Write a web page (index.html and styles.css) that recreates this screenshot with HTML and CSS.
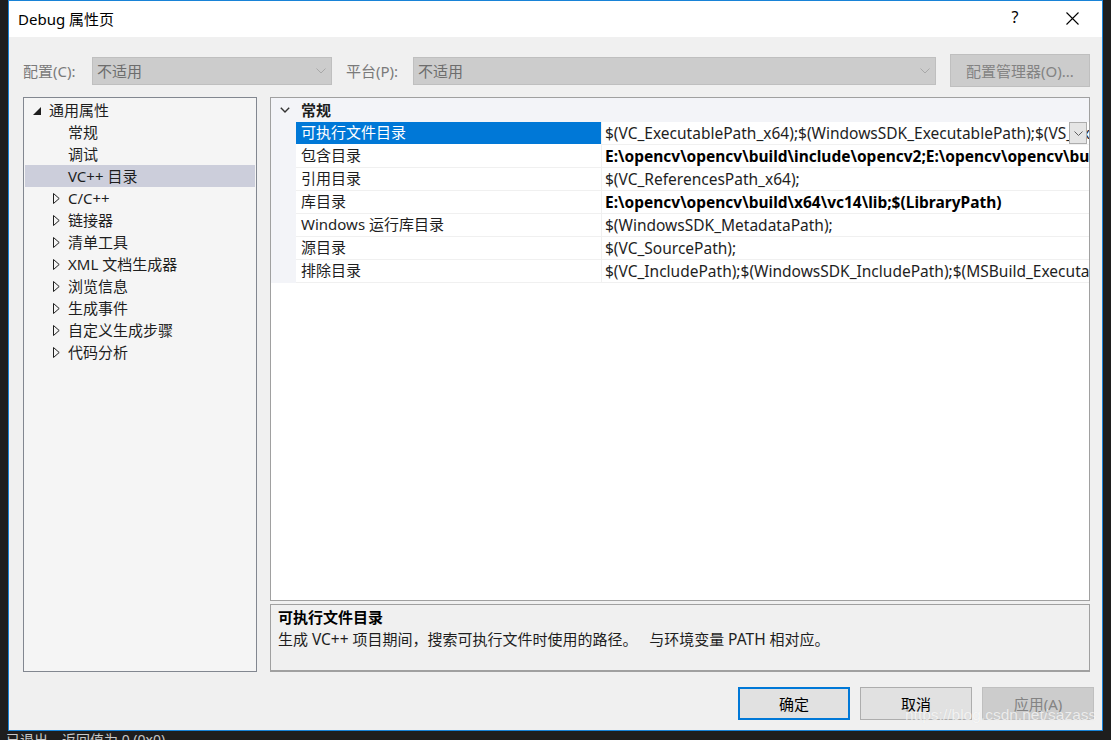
FILE: index.html
```html
<!DOCTYPE html>
<html lang="zh">
<head>
<meta charset="utf-8">
<title>Debug 属性页</title>
<link rel="stylesheet" href="styles.css">
</head>
<body>
<div class="screen">
  <div class="window">
    <div class="titlebar">
      <span class="title">Debug 属性页</span>
      <span class="tb-btn tb-help">?</span>
      <span class="tb-btn tb-close">
        <svg width="13" height="13" viewBox="0 0 13 13"><path d="M0.5 0.5 L12.5 12.5 M12.5 0.5 L0.5 12.5" stroke="#000" stroke-width="1.1" fill="none"/></svg>
      </span>
    </div>
    <div class="body">
      <div class="config-row">
        <span class="cfg-label cfg-label-1">配置(C):</span>
        <div class="combo combo-1"><span>不适用</span>
          <svg class="chev" width="10" height="6" viewBox="0 0 10 6"><path d="M0.5 0.5 L5 5 L9.5 0.5" stroke="#a8a8a8" fill="none"/></svg>
        </div>
        <span class="cfg-label cfg-label-2">平台(P):</span>
        <div class="combo combo-2"><span>不适用</span>
          <svg class="chev" width="10" height="6" viewBox="0 0 10 6"><path d="M0.5 0.5 L5 5 L9.5 0.5" stroke="#a8a8a8" fill="none"/></svg>
        </div>
        <div class="btn btn-disabled cfg-btn">配置管理器(O)...</div>
      </div>

      <div class="main">
        <div class="tree">
          <div class="tree-row">
            <span class="tw tw0"><svg width="8" height="8" viewBox="0 0 8 8"><polygon points="8,0 8,8 0,8" fill="#1e1e1e"/></svg></span>
            <span class="lbl">通用属性</span>
          </div>
          <div class="tree-row"><span class="tw tw1"></span><span class="lbl">常规</span></div>
          <div class="tree-row"><span class="tw tw1"></span><span class="lbl">调试</span></div>
          <div class="tree-row selected"><span class="tw tw1"></span><span class="lbl">VC++ 目录</span></div>
          <div class="tree-row"><span class="tw tw1"><svg width="7" height="11" viewBox="0 0 7 11"><polygon points="0.5,0.5 6.2,5.5 0.5,10.5" fill="none" stroke="#1e1e1e"/></svg></span><span class="lbl">C/C++</span></div>
          <div class="tree-row"><span class="tw tw1"><svg width="7" height="11" viewBox="0 0 7 11"><polygon points="0.5,0.5 6.2,5.5 0.5,10.5" fill="none" stroke="#1e1e1e"/></svg></span><span class="lbl">链接器</span></div>
          <div class="tree-row"><span class="tw tw1"><svg width="7" height="11" viewBox="0 0 7 11"><polygon points="0.5,0.5 6.2,5.5 0.5,10.5" fill="none" stroke="#1e1e1e"/></svg></span><span class="lbl">清单工具</span></div>
          <div class="tree-row"><span class="tw tw1"><svg width="7" height="11" viewBox="0 0 7 11"><polygon points="0.5,0.5 6.2,5.5 0.5,10.5" fill="none" stroke="#1e1e1e"/></svg></span><span class="lbl">XML 文档生成器</span></div>
          <div class="tree-row"><span class="tw tw1"><svg width="7" height="11" viewBox="0 0 7 11"><polygon points="0.5,0.5 6.2,5.5 0.5,10.5" fill="none" stroke="#1e1e1e"/></svg></span><span class="lbl">浏览信息</span></div>
          <div class="tree-row"><span class="tw tw1"><svg width="7" height="11" viewBox="0 0 7 11"><polygon points="0.5,0.5 6.2,5.5 0.5,10.5" fill="none" stroke="#1e1e1e"/></svg></span><span class="lbl">生成事件</span></div>
          <div class="tree-row"><span class="tw tw1"><svg width="7" height="11" viewBox="0 0 7 11"><polygon points="0.5,0.5 6.2,5.5 0.5,10.5" fill="none" stroke="#1e1e1e"/></svg></span><span class="lbl">自定义生成步骤</span></div>
          <div class="tree-row"><span class="tw tw1"><svg width="7" height="11" viewBox="0 0 7 11"><polygon points="0.5,0.5 6.2,5.5 0.5,10.5" fill="none" stroke="#1e1e1e"/></svg></span><span class="lbl">代码分析</span></div>
        </div>

        <div class="right">
          <div class="grid">
            <div class="grid-head">
              <div class="gutter">
                <svg width="10" height="6" viewBox="0 0 10 6"><path d="M0.8 0.8 L5 5 L9.2 0.8" stroke="#333" stroke-width="1.4" fill="none"/></svg>
              </div>
              <span class="section-title">常规</span>
            </div>
            <div class="grid-row sel">
              <div class="gutter"></div>
              <div class="name">可执行文件目录</div>
              <div class="value"><span class="vtext">$(VC_ExecutablePath_x64);$(WindowsSDK_ExecutablePath);$(VS_ExecutablePath);$(MSBuild_ExecutablePath)</span>
                <div class="dd">
                  <svg width="9" height="5" viewBox="0 0 9 5"><path d="M0.5 0.5 L4.5 4.5 L8.5 0.5" stroke="#606060" fill="none"/></svg>
                </div>
              </div>
            </div>
            <div class="grid-row">
              <div class="gutter"></div>
              <div class="name">包含目录</div>
              <div class="value bold"><span class="vtext">E:\opencv\opencv\build\include\opencv2;E:\opencv\opencv\build\include;$(IncludePath)</span></div>
            </div>
            <div class="grid-row">
              <div class="gutter"></div>
              <div class="name">引用目录</div>
              <div class="value"><span class="vtext">$(VC_ReferencesPath_x64);</span></div>
            </div>
            <div class="grid-row">
              <div class="gutter"></div>
              <div class="name">库目录</div>
              <div class="value bold"><span class="vtext">E:\opencv\opencv\build\x64\vc14\lib;$(LibraryPath)</span></div>
            </div>
            <div class="grid-row">
              <div class="gutter"></div>
              <div class="name">Windows 运行库目录</div>
              <div class="value"><span class="vtext">$(WindowsSDK_MetadataPath);</span></div>
            </div>
            <div class="grid-row">
              <div class="gutter"></div>
              <div class="name">源目录</div>
              <div class="value"><span class="vtext">$(VC_SourcePath);</span></div>
            </div>
            <div class="grid-row">
              <div class="gutter"></div>
              <div class="name">排除目录</div>
              <div class="value"><span class="vtext">$(VC_IncludePath);$(WindowsSDK_IncludePath);$(MSBuild_ExecutablePath);$(VC_LibraryPath_x64)</span></div>
            </div>
          </div>
          <div class="desc">
            <div class="desc-title">可执行文件目录</div>
            <div class="desc-text">生成 <span class="lat">VC++</span> 项目期间，搜索可执行文件时使用的路径。&nbsp;&nbsp;&nbsp;与环境变量 <span class="lat">PATH</span> 相对应。</div>
          </div>
        </div>
      </div>

      <div class="footer">
        <div class="btn btn-default">确定</div>
        <div class="btn">取消</div>
        <div class="btn btn-disabled">应用(A)</div>
      </div>
    </div>
  </div>
  <div class="bottom-text">已退出，返回值为 0 (0x0)。</div>
  <div class="watermark">https://blog.csdn.net/sazass</div>
</div>
</body>
</html>
```

FILE: styles.css
```css
* { box-sizing: border-box; }

html, body {
  margin: 0;
  padding: 0;
  background: #1e1e1e;
  overflow: hidden;
}

body {
  width: 1111px;
  height: 740px;
  font-family: "Noto Sans", "Noto Sans CJK SC", sans-serif;
  font-size: 15px;
  color: #1e1e1e;
}

.screen {
  position: relative;
  width: 1111px;
  height: 740px;
  overflow: hidden;
  background: #1e1e1e;
}

.window {
  margin-left: 8px;
  width: 1095px;
  height: 731px;
  border: 1px solid #1883d7;
  background: #f0f0f0;
  display: flex;
  flex-direction: column;
}

/* title bar */
.titlebar {
  height: 36px;
  background: #ffffff;
  display: flex;
  align-items: center;
  padding-left: 9px;
  padding-right: 7px;
  flex: none;
}
.title {
  flex: 1;
  font-size: 15px;
  color: #000;
  padding-bottom: 2px;
}
.tb-btn {
  width: 46px;
  height: 36px;
  display: flex;
  align-items: center;
  justify-content: center;
}
.tb-help {
  margin-right: 11px;
  font-size: 16px;
  color: #000;
  padding-bottom: 4px;
}
.tb-close svg { display: block; margin-bottom: 2px; }

/* body */
.body {
  flex: 1;
  display: flex;
  flex-direction: column;
  padding: 17px 12px 10px 14px;
}

.config-row {
  height: 33px;
  display: flex;
  align-items: center;
  flex: none;
}
.cfg-label {
  color: #7a7a7a;
  font-size: 15px;
}
.cfg-label-1 { width: 69px; }
.cfg-label-2 { width: 67px; margin-left: 14px; }
.combo {
  height: 28px;
  background: #cccccc;
  border: 1px solid #bfbfbf;
  display: flex;
  align-items: center;
  justify-content: space-between;
  padding: 0 5px 0 4px;
  color: #6d6d6d;
}
.combo span { padding-bottom: 1px; }
.combo-1 { width: 240px; }
.combo-2 { width: 523px; }
.chev { display: block; }

.btn {
  width: 112px;
  height: 33px;
  display: flex;
  align-items: center;
  justify-content: center;
  background: #e1e1e1;
  border: 1px solid #adadad;
  color: #000;
  font-size: 15px;
}
.btn-disabled {
  background: #cccccc;
  border-color: #bfbfbf;
  color: #838383;
}
.btn-default {
  border: 2px solid #0078d7;
}
.cfg-btn {
  width: 140px;
  margin-left: 14px;
}

/* main */
.main {
  margin-top: 10px;
  height: 575px;
  display: flex;
  gap: 13px;
  flex: none;
}

.tree {
  width: 234px;
  border: 1px solid #828790;
  background: #f5f5f5;
  padding: 1px 1px 0 1px;
  display: flex;
  flex-direction: column;
}
.tree-row {
  height: 22px;
  flex: none;
  display: flex;
  align-items: center;
  color: #1e1e1e;
  white-space: nowrap;
}
.tree-row.selected,
.tree-row.selected .tw { background-color: #cccedb; }
.tw {
  flex: none;
  display: flex;
  align-items: center;
  height: 22px;
}
.tw svg { display: block; margin-top: 1px; }
.tw0 { width: 24px; padding-left: 8px; }
.tw1 { width: 43px; padding-left: 28px; }
.lbl { padding-bottom: 1px; }

.right {
  width: 820px;
  display: flex;
  flex-direction: column;
  gap: 3px;
}

.grid {
  height: 504px;
  border: 1px solid #a0a0a0;
  background: #ffffff;
  overflow: hidden;
}
.grid-head {
  height: 24px;
  display: flex;
  align-items: center;
  background: #f3f4f8;
}
.gutter {
  width: 25px;
  flex: none;
  align-self: stretch;
  background: #f3f4f8;
  display: flex;
  align-items: center;
  justify-content: center;
}
.grid-head .gutter svg { margin-left: 2px; }
.section-title {
  font-weight: bold;
  padding-left: 5px;
  padding-bottom: 1px;
  color: #1e1e1e;
}
.grid-row {
  height: 23px;
  display: flex;
  white-space: nowrap;
}
.grid-row .name {
  width: 305px;
  flex: none;
  padding-left: 5px;
  line-height: 21px;
  border-bottom: 1px solid #f0f0f0;
  color: #1e1e1e;
}
.grid-row .value {
  flex: 1;
  min-width: 0;
  display: flex;
  align-items: center;
  border-left: 1px solid #f0f0f0;
  border-bottom: 1px solid #f0f0f0;
  padding-left: 3px;
  overflow: hidden;
  position: relative;
  color: #1e1e1e;
  font-size: 15.5px;
}
.vtext { padding-bottom: 1px; }
.grid-row .value.bold { font-weight: bold; color: #000; }
.grid-row.sel .name {
  background: #0078d7;
  color: #ffffff;
  border-bottom-color: #ffffff;
}
.dd {
  position: absolute;
  right: 2px;
  top: 0;
  width: 18px;
  height: 22px;
  background: #e5e5e5;
  border: 1px solid #adadad;
  display: flex;
  align-items: center;
  justify-content: center;
}

.desc {
  height: 68px;
  border: 1px solid #a0a0a0;
  border-bottom: 2px solid #a0a0a0;
  background: #f0f0f0;
  padding: 1px 7px 0 7px;
}
.desc-title {
  font-weight: bold;
  color: #000;
  line-height: 22px;
}
.desc-text {
  line-height: 23px;
  color: #1e1e1e;
}
.desc-text .lat { font-size: 15.5px; }

/* footer */
.footer {
  margin-top: 15px;
  display: flex;
  justify-content: flex-end;
  gap: 10px;
  margin-right: -4px;
  flex: none;
}

.bottom-text {
  padding-left: 6px;
  height: 9px;
  overflow: hidden;
  color: #c8c8c8;
  font-size: 14px;
  line-height: 18px;
}

.watermark {
  position: absolute;
  left: 905px;
  top: 706px;
  font-family: "Liberation Sans", Arial, sans-serif;
  font-size: 15.5px;
  color: rgba(255, 255, 255, 0.72);
  text-shadow: 0 0 1px rgba(0, 0, 0, 0.08);
  white-space: nowrap;
}
```
